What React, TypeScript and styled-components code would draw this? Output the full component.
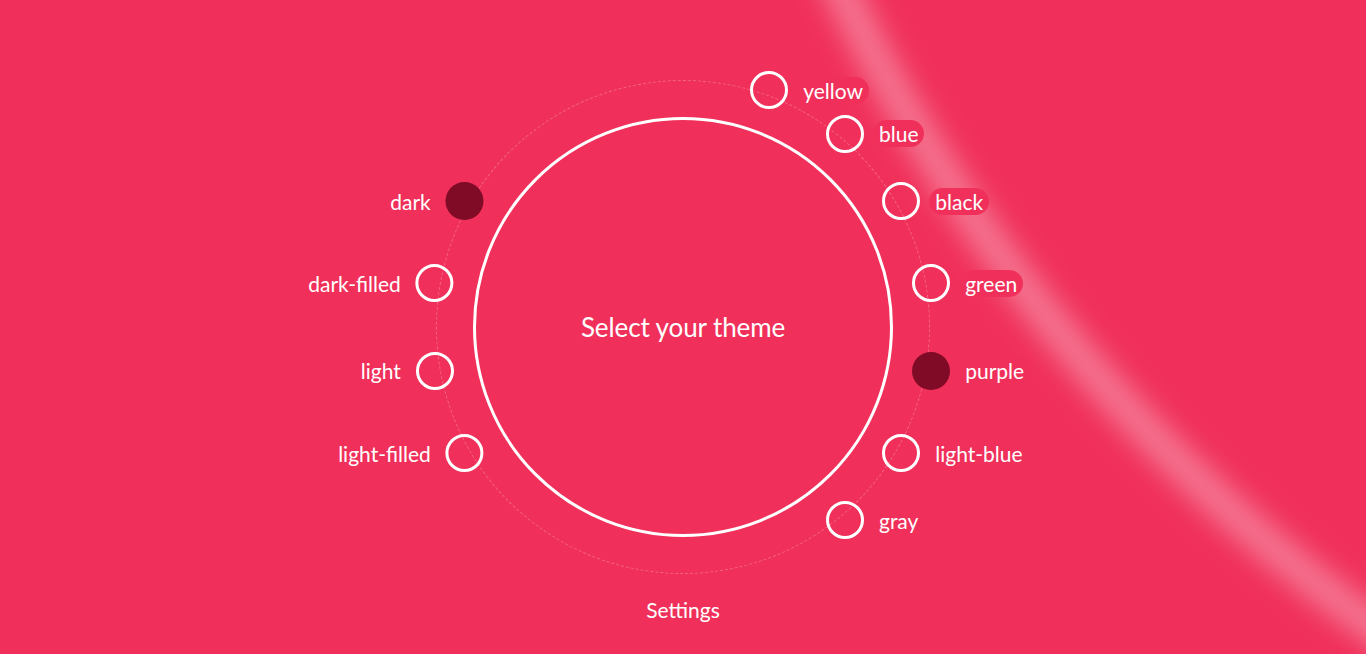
import React from "react";
import styled, { createGlobalStyle } from "styled-components";

const BG = "#f0305a";
const DARK = "#7f0b26";
const RING = 252;

const GlobalStyle = createGlobalStyle`
  html, body {
    margin: 0;
    padding: 0;
    background: ${BG};
    overflow: hidden;
  }
  body {
    font-family: Lato, "Open Sans", "Liberation Sans", sans-serif;
    color: #fff;
  }
`;

type Theme = { name: string; angle: number; active?: boolean };

const themes: Theme[] = [
  { name: "yellow", angle: 20 },
  { name: "blue", angle: 40 },
  { name: "black", angle: 60 },
  { name: "green", angle: 80 },
  { name: "purple", angle: 100, active: true },
  { name: "light-blue", angle: 120 },
  { name: "gray", angle: 140 },
  { name: "light-filled", angle: 240 },
  { name: "light", angle: 260 },
  { name: "dark-filled", angle: 280 },
  { name: "dark", angle: 300, active: true },
];

const App = () => {
  return (
    <>
      <GlobalStyle />
      <Page>
        <Streak viewBox="0 0 1366 654" preserveAspectRatio="none">
          <defs>
            <filter id="soft" x="-20%" y="-20%" width="140%" height="140%">
              <feGaussianBlur stdDeviation="13" />
            </filter>
          </defs>
          <circle
            cx="2350"
            cy="-731"
            r="1672"
            fill="none"
            stroke="#fff"
            strokeOpacity="0.32"
            strokeWidth="36"
            filter="url(#soft)"
          />
        </Streak>

        <Wheel>
          <DashedRing />
          <MainCircle>
            <Title>Select your theme</Title>
          </MainCircle>
          {themes.map((t) => {
            const rad = (t.angle * Math.PI) / 180;
            const x = 260 + RING * Math.sin(rad);
            const y = 260 - RING * Math.cos(rad);
            const left = t.angle > 180;
            return (
              <Option
                key={t.name}
                $left={left}
                style={{ left: left ? x + 19 : x - 19, top: y - 19 }}
              >
                <Dot $active={t.active} />
                <Label>{t.name}</Label>
              </Option>
            );
          })}
        </Wheel>

        <Settings>Settings</Settings>
      </Page>
    </>
  );
};

const Page = styled.div`
  position: relative;
  height: 100vh;
  min-height: 654px;
  display: flex;
  flex-direction: column;
  align-items: center;
  overflow: hidden;
`;

const Streak = styled.svg`
  position: absolute;
  inset: 0;
  width: 100%;
  height: 100%;
  pointer-events: none;
  z-index: 0;
`;

const Wheel = styled.div`
  position: relative;
  z-index: 1;
  width: 520px;
  height: 520px;
  margin-top: 67px;
  display: grid;
  place-items: center;
  > * {
    grid-area: 1 / 1;
  }
`;

const DashedRing = styled.div`
  width: 494px;
  height: 494px;
  border-radius: 50%;
  border: 1px dashed rgba(255, 255, 255, 0.25);
  box-sizing: border-box;
`;

const MainCircle = styled.div`
  width: 420px;
  height: 420px;
  border-radius: 50%;
  border: 3px solid #fff;
  box-sizing: border-box;
  display: flex;
  align-items: center;
  justify-content: center;
`;

const Title = styled.span`
  font-size: 26px;
  font-weight: 400;
  letter-spacing: -0.1px;
`;

const Option = styled.div<{ $left: boolean }>`
  position: absolute;
  display: flex;
  flex-direction: ${({ $left }) => ($left ? "row-reverse" : "row")};
  align-items: center;
  gap: 9px;
  transform: ${({ $left }) => ($left ? "translateX(-100%)" : "none")};
  white-space: nowrap;
  cursor: pointer;
`;

const Dot = styled.span<{ $active?: boolean }>`
  width: 38px;
  height: 38px;
  border-radius: 50%;
  box-sizing: border-box;
  flex: none;
  border: ${({ $active }) => ($active ? "none" : "3px solid #fff")};
  background: ${({ $active }) => ($active ? DARK : "transparent")};
`;

const Label = styled.span`
  font-size: 21px;
  line-height: 27px;
  padding: 0 6px;
  border-radius: 14px;
  background: ${BG};
`;

const Settings = styled.div`
  position: relative;
  z-index: 1;
  margin-top: 10px;
  font-size: 21px;
  line-height: 26px;
`;

export default App;
